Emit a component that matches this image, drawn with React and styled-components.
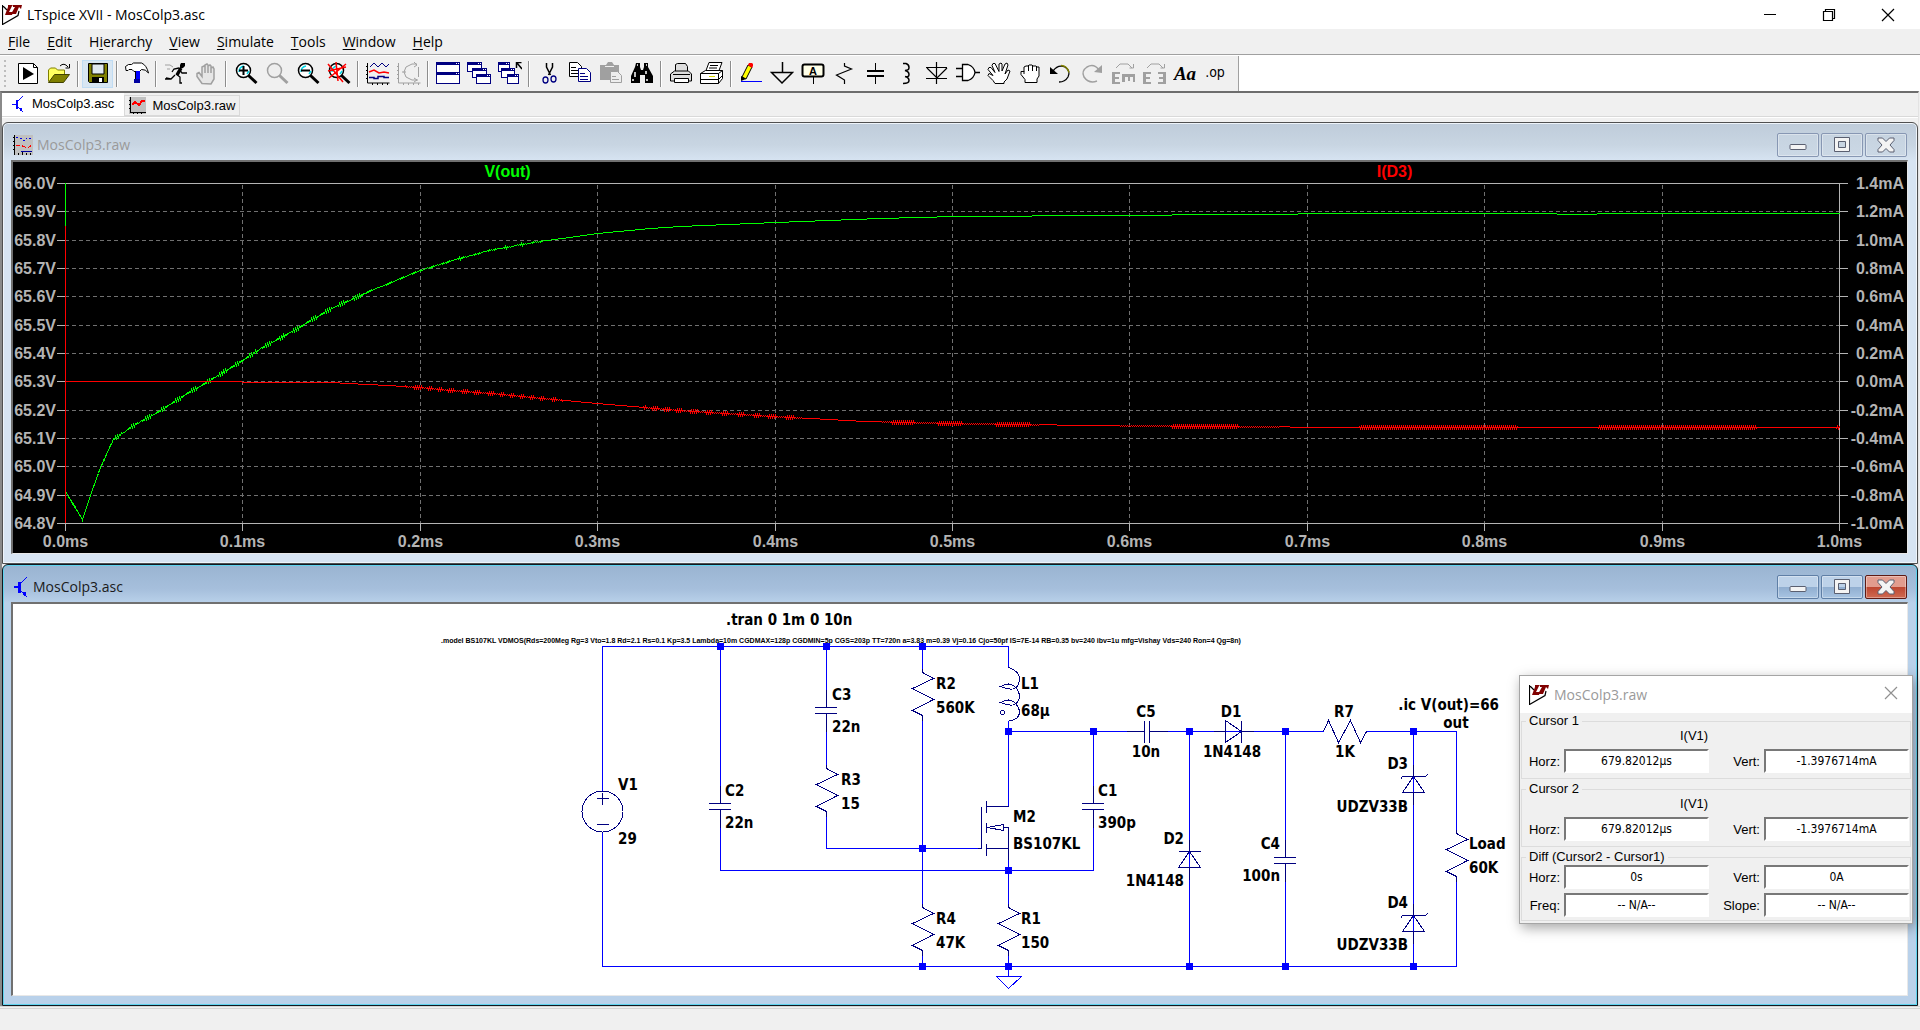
import React, { useLayoutEffect, useRef, useState } from "react";
import styled, { createGlobalStyle, css } from "styled-components";

const UI_FONT = '"Open Sans", "Noto Sans", sans-serif';
const ARIAL = '"Liberation Sans", Arial, sans-serif';
const TAHOMA = '"DejaVu Sans Condensed", "DejaVu Sans", sans-serif';

const Global = createGlobalStyle`
  * { box-sizing: border-box; }
  body { margin: 0; background: #f0f0f0; font-family: ${UI_FONT}; color: #000; }
  button { font: inherit; color: inherit; padding: 0; border: 0; background: none; }
`;

const Shell = styled.div`
  display: flex;
  flex-direction: column;
  min-height: 100vh;
`;

/* ---------- application title and menu ---------- */

const TitleBar = styled.header`
  display: flex;
  align-items: center;
  height: 29px;
  padding: 0 3px 0 2px;
  background: #fff;
`;

const AppTitle = styled.h1`
  flex: 1;
  margin: 0 0 0 5px;
  font-size: 14px;
  font-weight: 400;
  line-height: 20px;
`;

const CaptionButton = styled.button`
  display: grid;
  place-items: center;
  width: 59px;
  height: 28px;
`;

const MenuBar = styled.nav`
  display: flex;
  gap: 1px;
  height: 25px;
  background: #f0f0f0;
`;

const MenuItem = styled.button`
  padding: 0 8px;
  font-size: 14px;
  line-height: 24px;
  u { text-underline-offset: 2px; text-decoration-thickness: 1px; }
`;

/* ---------- toolbar ---------- */

const ToolbarRow = styled.div`
  display: flex;
  height: 37px;
  border-top: 1px solid #a0a0a0;
  background: #fff;
`;

const Toolbar = styled.div`
  display: flex;
  align-items: center;
  margin-top: 1px;
  padding: 0 7px 0 4px;
  border-right: 1px solid #a0a0a0;
  background: #f0f0f0;
`;

const Grip = styled.span`
  width: 2px;
  height: 28px;
  margin-right: 6px;
  background: repeating-linear-gradient(#bdbdbd 0 2px, transparent 2px 5px);
`;

const Tool = styled.button`
  display: grid;
  place-items: center;
  width: 31px;
  height: 28px;
  ${(p) => p.$hot && css`
    background: #d8e6f2;
    border: 1px solid #c0dcf3;
  `}
`;

const Divider = styled.span`
  width: 2px;
  height: 26px;
  margin: 0 3px;
  border-left: 1px solid #8d8d8d;
  border-right: 1px solid #fff;
`;

/* ---------- tabs and workspace ---------- */

const Workspace = styled.main`
  display: flex;
  flex: 1;
  flex-direction: column;
  margin-right: 1px;
  border-top: 2px solid #6d6d6d;
  border-left: 2px solid #8a8a8a;
  border-right: 1px solid #e3e3e3;
`;

const Tabs = styled.div`
  display: flex;
  align-items: flex-end;
  height: 24px;
  border-bottom: 1px solid #d9d9d9;
`;

const Tab = styled.button`
  display: flex;
  align-items: center;
  gap: 6px;
  height: ${(p) => (p.$active ? 23 : 21)}px;
  border: ${(p) => (p.$active ? "0" : "1px solid #d9d9d9")};
  padding: ${(p) => (p.$active ? "0 10px 2px 8px" : "0 4px")};
  background: ${(p) => (p.$active ? "#fff" : "#f0f0f0")};
  font-family: ${ARIAL};
  font-size: 13px;
`;

const Strip = styled.div`
  height: 5px;
  border-top: 1px solid #fff;
  background: #f0f0f0;
`;

const Windows = styled.div`
  display: flex;
  flex: 1;
  flex-direction: column;
`;

const Frame = styled.section`
  position: relative;
  display: flex;
  flex: 1 1 0;
  flex-direction: column;
  padding: 0 9px 9px 8px;
  border: 1px solid ${(p) => (p.$active ? "#101820" : "#505050")};
  border-radius: 6px 6px 0 0;
  background: ${(p) =>
    p.$active
      ? "linear-gradient(#9ab4d1, #a6bfdc 24px, #b9d1ea 38px)"
      : "linear-gradient(#bfccda, #c8d5e2 22px, #d7e4f2 38px)"};
  box-shadow: inset 0 0 0 1px ${(p) => (p.$active ? "#5fd3ee" : "#eef4fa")};
`;

const FrameBar = styled.div`
  display: flex;
  align-items: center;
  gap: 2px;
  height: 37px;
  padding: 7px 1px 0 2px;
`;

const FrameTitle = styled.h2`
  flex: 1;
  margin: 0 0 0 2px;
  font-size: 14px;
  font-weight: 400;
  line-height: 20px;
  color: ${(p) => (p.$active ? "#1a1a1a" : "#9a9a9a")};
`;

const FrameButton = styled.button`
  display: grid;
  place-items: center;
  width: 42px;
  height: 24px;
  border: 1px solid ${(p) => (p.$tone === "close" ? "#5e1a14" : p.$tone === "active" ? "#5f7fa6" : "#8797b3")};
  border-radius: 2px;
  background: ${(p) =>
    p.$tone === "close"
      ? "linear-gradient(#e29c8e 0 48%, #bd4530 50%, #cf6a52)"
      : p.$tone === "active"
      ? "linear-gradient(#bdd2e9 0 48%, #90aed0 50%, #a8c4e2)"
      : "linear-gradient(#c6d3e0, #cbd8e5)"};
  box-shadow: inset 0 0 0 1px rgba(255, 255, 255, 0.35);
`;

const Client = styled.div`
  flex: 1;
  min-height: 240px;
  overflow: hidden;
  border: 2px solid;
  border-width: 2px 1px 1px 2px;
  border-color: #707070 #e8e8e8 #e8e8e8 #707070;
  background: ${(p) => (p.$dark ? "#000" : "#fff")};
  position: relative;
`;

const Fill = styled.div`
  position: absolute;
  inset: 0;
  overflow: hidden;
`;

const Drawing = styled.svg`
  display: block;
  width: 100%;
  height: 100%;
`;

const StatusBar = styled.footer`
  height: 24px;
  border-top: 3px double #d5d5d5;
  background: #f0f0f0;
`;

/* ---------- cursor read-out dialog ---------- */

const Dialog = styled.aside`
  position: absolute;
  top: 110px;
  right: 4px;
  width: 394px;
  border: 1px solid #a5a5a5;
  background: #f0f0f0;
  box-shadow: 2px 4px 12px rgba(0, 0, 0, 0.35);
  font-family: ${ARIAL};
  font-size: 13px;
`;

const DialogBar = styled.div`
  display: flex;
  align-items: center;
  height: 37px;
  padding: 0 14px 0 9px;
  background: #fff;
  font-family: ${UI_FONT};
`;

const DialogTitle = styled.h3`
  flex: 1;
  margin: 0 0 0 5px;
  font-size: 14px;
  font-weight: 400;
  color: #9a9a9a;
`;

const Group = styled.fieldset`
  min-width: 0;
  margin: 0 1px 2px;
  padding: 0 1px ${(p) => (p.$last ? 3 : 5)}px 7px;
  border: 1px solid #dcdcdc;
`;

const Legend = styled.legend`
  margin-left: -3px;
  padding: 0 3px;
  line-height: 16px;
`;

const TraceName = styled.p`
  margin: 0 0 6px;
  padding-left: 151px;
  line-height: 14px;
`;

const Fields = styled.div`
  display: grid;
  grid-template-columns: 31px 145px 1fr 145px;
  align-items: center;
  gap: 4px;
`;

const FieldLabel = styled.label`
  justify-self: end;
`;

const Field = styled.input`
  width: 100%;
  height: 24px;
  padding: 0;
  border: 2px solid;
  border-color: #787878 #fff #fff #787878;
  background: #fff;
  font-family: ${TAHOMA};
  font-size: 12px;
  text-align: center;
  color: #000;
`;

/* ---------- small drawings ---------- */

const Logo = () => (
  <svg width="20" height="20" viewBox="0 0 20 20" aria-hidden="true">
    <path d="M.5 0V19.5L16 10.5L17 6M.5.5L5 5" fill="none" stroke="#000" strokeWidth="1.2" />
    <path d="M6 0h5l-1 1-3 6h3l2-2-2 5H3l3-8zM11 0h9l-1 4-2-2-3 7H9l4-7h-2z" fill="#800000" />
  </svg>
);

const TransistorIcon = ({ size = 20 }) => (
  <svg width="16" height={size} viewBox="0 0 16 20" shapeRendering="crispEdges" aria-hidden="true">
    <path d="M1 10h4M8 6l6-6M7 13l7 7" fill="none" stroke="#0000ff" strokeWidth="1.2" />
    <path d="M5 5h3v11H5zM9 15l4 0v4l-2 0z" fill="#0000ff" />
  </svg>
);

const WaveIcon = () => (
  <svg width="17" height="17" viewBox="0 0 17 17" shapeRendering="crispEdges" aria-hidden="true">
    <rect width="17" height="17" fill="#c0c0c0" />
    <path d="M1.500 0v15.500h15M0 3.500h1M0 7.500h1M0 11.500h1M4.500 15v2M8.500 15v2M12.500 15v2" fill="none" stroke="#000" strokeWidth="1.500" />
    <path d="M3 8l3-3 4 3 3-4h3" fill="none" stroke="#f00" strokeWidth="2" />
  </svg>
);

const PlotIcon = () => (
  <svg width="20" height="20" viewBox="0 0 20 20" shapeRendering="crispEdges" aria-hidden="true">
    <rect x="2" width="18" height="20" fill="#c0c0c0" />
    <path d="M1.500 0v20M0 2.500h1M0 6.500h1M0 10.500h1M0 14.500h1M5.500 18v2M9.500 17v3M13.500 18v2M17.500 18v2" stroke="#000" fill="none" />
    <path d="M3 2l4 1 4 3 4-4 4 3" stroke="#0000e0" strokeDasharray="2 2" fill="none" />
    <path d="M3 10h4l5 2h4l3-2" stroke="#f00" strokeDasharray="4 2" fill="none" />
    <path d="M8 17l3-1h8" stroke="#0000a0" fill="none" />
  </svg>
);

const CaptionIcon = ({ kind, color = "#000" }) => (
  <svg width="14" height="14" viewBox="0 0 14 14" fill="none" stroke={color} aria-hidden="true">
    {kind === "min" && <path d="M1 6.500h12" />}
    {kind === "max" && <path d="M1.500 3.500h9v9h-9zM3.500 3.500v-2h9v9h-2" strokeWidth="1.200" />}
    {kind === "close" && <path d="M1 1l12 12M13 1L1 13" strokeWidth="1.200" />}
  </svg>
);

const FrameIcon = ({ kind }) => (
  <svg width="20" height="18" viewBox="0 0 20 18" aria-hidden="true">
    {kind === "min" && <rect x="2" y="8.500" width="16" height="5" rx="1" fill="#f4f4f4" stroke="#5a5f70" />}
    {kind === "max" && (
      <path d="M2.500 1.500h15v14h-15zM6.500 5.500v6h7v-6z" fill="#f4f4f4" fillRule="evenodd" stroke="#5a5f70" />
    )}
    {kind === "close" && (
      <path d="M2 2h4.500L10 5.500 13.500 2H18v2.500L14 9l4 4.500V16h-4.500L10 12.500 6.500 16H2v-2.500L6 9 2 4.500z" fill="#f4f4f4" stroke="#5a5f70" />
    )}
  </svg>
);

/* ---------- toolbar icons, each on a 24 px grid ---------- */

const K = "#000";
const G = "#a0a0a0";
const N = "#000080";

const Lens = ({ c = K, handle = K, glass = "#fff", mark }) => (
  <>
    <circle cx="9.500" cy="8.500" r="7" fill={glass} stroke={c} strokeWidth="1.500" />
    {c === K && <path d="M5 10q0-5 5-6M13 12l2-3" stroke="#00d8e8" strokeWidth="1.500" fill="none" />}
    <path d="M14.500 13.500l8 7.500" stroke={handle} strokeWidth="3" />
    <path d={mark} stroke={K} strokeWidth="2" fill="none" />
  </>
);

const MiniWin = ({ x, y, w = 14, h = 9 }) => (
  <>
    <rect x={x + 0.5} y={y + 0.5} width={w} height={h} fill="#fff" stroke={N} />
    <rect x={x} y={y} width={w + 1} height="3" fill={N} />
    <path d={`M${x + w - 3} ${y + 1.5}h1m1 0h1`} stroke="#fff" />
  </>
);

const openHand =
  "M8 21.500l-2-3-5-5 1-2 4 2-5-6 1-2 2 0 4 5-3-7 1-2 2 0 4 8V2l2-1 1 1v7l3-7 2-1 1 2-3 9 3-4 2 1-3 8-3 3v1.500z";

const icons = {
  New: (
    <>
      <path d="M2.500 1.500h15l4 4v16h-19z" fill="#fff" stroke={K} />
      <path d="M17.500 1.500v4h4" fill="none" stroke={K} />
      <path d="M7 5l11 7-11 6z" fill={K} />
    </>
  ),
  Open: (
    <>
      <path d="M1.500 19.500V8l2-2h5l2 2h7v4" fill="#ffff60" stroke="#808000" />
      <path d="M1.500 20.500l6-8h15l-6 8z" fill="#808000" stroke="#404000" />
      <path d="M13 4q4-4 8 1M22.500 2v4h-4" fill="none" stroke={K} />
    </>
  ),
  Save: (
    <>
      <path d="M2.500 1.500h19v19h-18l-1-1z" fill="#808000" stroke={K} />
      <path d="M6 2h12v10H6z" fill="#dfe8f0" stroke={K} />
      <path d="M6 15h12v6H6z" fill={K} />
      <path d="M13 16h3v4h-3z" fill="#fff" />
    </>
  ),
  "Control Panel": (
    <>
      <path d="M.5 4.500l3-2h3l2-1.500h8q5 2 7 10-3-4-7-3.500l-2 2H9l-2-2H4l-1 1H1z" fill="#fff" stroke={K} />
      <path d="M10 9h5v12h-5z" fill="#0000ff" />
      <path d="M9 17h6v4H9z" fill="#0000a0" />
      <path d="M10.500 9v8" stroke={K} />
    </>
  ),
  Run: (
    <>
      <path d="M17 1h4v3l-2 2h-3V3z" fill={K} />
      <path d="M17 6l-4 7" stroke={K} strokeWidth="3.500" fill="none" />
      <path d="M15 6l-5 1-2 3M16 8l2 3h5M12 12l4 3v6h2M11 13l-4 4H1M7 17l-5-1" stroke={K} strokeWidth="1.300" fill="none" />
      <path d="M1 3h5l3 2M3 7h3" stroke={G} fill="none" />
    </>
  ),
  Halt: (
    <path d="M7 21.500l-5-7v-3l2-1 3 4V5l2-1 1 1v6-8l2-1 1 1v8-7l2-1 1 1v7-5l2-1 1 2v10l-3 5z" fill="#e6e6e6" stroke={G} strokeWidth="1.500" />
  ),
  "Zoom In": <Lens mark="M5 8.500h9M9.500 4v9" />,
  Pan: <Lens c={G} handle={G} glass="#eee" mark="" />,
  "Zoom Out": <Lens mark="M5 8.500h9" />,
  "Zoom Fit": (
    <>
      <Lens mark="" />
      <path d="M1 2l15 18M19 2L2 16M1 9l18-4M9 0l2 19" stroke="#f00" strokeWidth="1.500" fill="none" />
    </>
  ),
  Autorange: (
    <>
      <path d="M1.500 1v20h22M0 4.500h2M0 8.500h2M0 12.500h2M0 16.500h2M6.500 21v2M11.500 21v2M16.500 21v2M21.500 21v2" stroke={K} fill="none" />
      <path d="M4 5l4-4 4 4 4-4 4 4 3-3" stroke={N} fill="none" />
      <path d="M3 10l5-2 5 3 5-1 5 1" stroke="#f00" strokeWidth="1.500" fill="none" />
      <path d="M3 15.500h5v1h4v-2h6v1h5" stroke={N} strokeWidth="1.500" fill="none" />
    </>
  ),
  "View FFT": (
    <path d="M1.500 1v20h22M0 4.500h2M0 8.500h2M0 12.500h2M0 16.500h2M6.500 21v2M11.500 21v2M16.500 21v2M21.500 21v2M20 2h-5L9 5l-2 5 2 5 6 3h6M17 0l3 3-3 2M17 16l3 2-3 2M21.500 5v10M5 10h4" stroke={G} fill="none" />
  ),
  Tile: (
    <>
      <MiniWin x={0} y={0} w={23} h={10} />
      <MiniWin x={0} y={10} w={23} h={11} />
    </>
  ),
  Cascade: (
    <>
      <MiniWin x={0} y={0} />
      <MiniWin x={5} y={6} />
      <MiniWin x={9} y={12} />
    </>
  ),
  "Close All": (
    <>
      <MiniWin x={0} y={0} w={11} />
      <MiniWin x={3} y={6} w={13} />
      <MiniWin x={9} y={12} w={11} />
      <path d="M19 1l5 6M18.500 6V.500h5" stroke={K} strokeWidth="1.500" fill="none" />
    </>
  ),
  Cut: (
    <>
      <path d="M9.500 1v4l4 8M15.500 1v4l-4 8" stroke={K} strokeWidth="1.500" fill="none" />
      <ellipse cx="8.500" cy="18" rx="2.500" ry="3" fill="none" stroke={N} strokeWidth="1.300" />
      <ellipse cx="16.500" cy="17" rx="2.500" ry="3" fill="none" stroke={N} strokeWidth="1.300" />
    </>
  ),
  Copy: (
    <>
      <path d="M1.500 .5h8l4 4v10h-12z" fill="#fff" stroke={K} />
      <path d="M3 5.500h5M3 8.500h7M3 11.500h7" stroke={K} />
      <path d="M10.500 6.500h8l4 4v9h-12z" fill="#fff" stroke={N} />
      <path d="M12 11.500h5M12 14.500h8M12 17.500h8" stroke={N} />
    </>
  ),
  Paste: (
    <>
      <path d="M1 3h6l2-3h4l2 3h5v15H1z" fill={G} />
      <path d="M6 4.500h9" stroke="#eee" />
      <path d="M11.500 9.500h7l4 4v7h-11z" fill="#eee" stroke={G} />
      <path d="M13 14.500h4M13 17.500h7" stroke={G} />
    </>
  ),
  Find: (
    <>
      <path d="M6 1h4v4l1 3h2l1-3V1h4v4l5 9v7h-8v-8h-5v8H1v-7l4-9z" fill={K} />
      <path d="M7 3h1M16 3h1M5 10v5M16 9v3M3 17v2M17 17v2" stroke="#fff" strokeWidth="1.500" />
    </>
  ),
  Print: (
    <>
      <path d="M6.500 9V2.500l2-1h8l2 3V9" fill="#ddd" stroke={K} />
      <path d="M1.500 12l4-3h14l3 3v7h-21z" fill="#ddd" stroke={K} />
      <path d="M5.500 16.500h14v4h-14z" fill="#fff" stroke={K} />
      <path d="M4 12.500h17" stroke={K} />
    </>
  ),
  "Print Setup": (
    <>
      <path d="M6 8.500L9 .500h13l-3 8z" fill="#fff" stroke={K} />
      <path d="M10 3.500h8M9 6h8" stroke={K} />
      <path d="M.5 11.500l5-3h17v8l-4 5h-18z" fill="#fff" stroke={K} />
      <path d="M.5 11.500h18v10M18.500 11.500l4-3M.5 17.500h18l4-4" stroke={K} fill="none" />
      <path d="M9 14.500h6" stroke="#d8d800" />
    </>
  ),
  Wire: (
    <>
      <path d="M3 15L9 3l4 2-6 12z" fill="#ffff00" stroke={K} />
      <path d="M9 3l1-2h3l1 1v2l-1 2z" fill="#f00" />
      <path d="M2 19v-5l5 3z" fill={K} />
      <path d="M2 19.500h21" stroke="#0000ff" />
    </>
  ),
  Ground: <path d="M12.500 0v10.500M1.500 10.500h21L12 21z" fill="none" stroke={K} strokeWidth="1.500" />,
  "Label Net": (
    <>
      <rect x="1.500" y="2.500" width="21" height="12" rx="2" fill="#ffffe8" stroke={K} strokeWidth="2" />
      <text x="12" y="12.500" textAnchor="middle" fontFamily={ARIAL} fontSize="11" fontWeight="700">A</text>
      <path d="M12.500 15v7" stroke={K} />
    </>
  ),
  Resistor: <path d="M12.500 1v3l7 3-15 6 8 5v4" fill="none" stroke={K} strokeWidth="1.200" />,
  Capacitor: (
    <>
      <path d="M12.500 1v7M12.500 14v8" stroke={K} />
      <path d="M4 9h17M4 14h17" stroke={K} strokeWidth="2" />
    </>
  ),
  Inductor: <path d="M9 1.500h3q3 1 3 4t-4 3q4 1 4 4t-4 2q4 1 4 4t-6 3" fill="none" stroke={K} strokeWidth="1.500" />,
  Diode: <path d="M11.500 0v22M1 5.500h21M1 16.500h21M2 6l10 10 10-10" fill="none" stroke={K} strokeWidth="1.200" />,
  Component: (
    <>
      <path d="M6.500 2.500H12q6 2 7 8-1 6-7 8H6.500z" fill="#fff" stroke={K} strokeWidth="1.300" />
      <path d="M0 6.500h6M0 14.500h6M19 10.500h5" stroke={K} strokeWidth="1.500" />
    </>
  ),
  Move: <path d={openHand} fill="#fff" stroke={K} />,
  Drag: (
    <>
      <path d="M7 20.500v-3l-4-5v-3h3V5l2-1h2l1-1h3l1 1h3l1 1h2v9l-2 3v3.500z" fill="#fff" stroke={K} />
      <path d="M6 9v3M10.500 4v5M14.500 4v5M18.500 5v4" stroke={K} fill="none" />
    </>
  ),
  Undo: (
    <>
      <path d="M4 9q5-7 12-4 6 4 3 10-3 5-9 5" fill="none" stroke={K} strokeWidth="1.300" />
      <path d="M12 3.500q6 0 8 7" fill="none" stroke="#808000" strokeWidth="1.500" />
      <path d="M1 5v7h8z" fill={K} />
    </>
  ),
  Redo: (
    <>
      <path d="M19 8q-5-7-12-3-6 4-3 10 5 7 13 4" fill="none" stroke={G} strokeWidth="1.500" />
      <path d="M22 3v8l-8-1z" fill={G} />
    </>
  ),
  Mirror: (
    <>
      <path d="M1 10h8v2H4v3h4v2H4v3h5v2H1zM11 12h13v8h-2v-5h-3v4h-2v-4h-3v5h-3z" fill={G} />
      <path d="M5 6l4-4h8l4 4M22.500 2v4h-4" fill="none" stroke={G} />
    </>
  ),
  Rotate: (
    <>
      <path d="M1 10h8v2H4v3h4v2H4v3h5v2H1zM16 10h8v12h-8v-2h5v-3h-4v-2h4v-3h-5z" fill={G} />
      <path d="M5 6l4-4h8l4 4M22.500 2v4h-4" fill="none" stroke={G} />
    </>
  ),
  Text: (
    <text x="12" y="18" textAnchor="middle" fontFamily='"Liberation Serif", serif' fontStyle="italic" fontWeight="700" fontSize="19">Aa</text>
  ),
  "SPICE Directive": (
    <text x="11" y="15" textAnchor="middle" fontFamily={TAHOMA} fontSize="14">.op</text>
  ),
};

const toolGroups = [
  ["New", "Open"],
  ["Save"],
  ["Control Panel"],
  ["Run", "Halt"],
  ["Zoom In", "Pan", "Zoom Out", "Zoom Fit"],
  ["Autorange", "View FFT"],
  ["Tile", "Cascade", "Close All"],
  ["Cut", "Copy", "Paste", "Find"],
  ["Print", "Print Setup"],
  ["Wire", "Ground", "Label Net", "Resistor", "Capacitor", "Inductor", "Diode", "Component", "Move", "Drag", "Undo", "Redo", "Mirror", "Rotate", "Text", "SPICE Directive"],
];

/* ---------- waveform plot ---------- */

const UNIT_W = 1774;
const UNIT_H = 340;

const vout = [
  [0, 308], [17, 336], [25, 312], [35, 284], [48, 256], [68, 242], [92, 229], [122, 210], [143, 198],
  [177, 177], [197, 164], [225, 149], [266, 125], [306, 107], [355, 87], [387, 77], [424, 67], [468, 59],
  [532, 50], [585, 45], [615, 43], [710, 39], [814, 35], [890, 33], [1043, 32], [1295, 30], [1491, 30],
  [1492, 31], [1531, 31], [1532, 30], [1774, 30],
];

const id3 = [
  [0, 198], [176, 198], [177, 199], [266, 199], [302, 201], [323, 202], [355, 204], [387, 207], [428, 210],
  [468, 214], [532, 220], [615, 227], [709, 233], [800, 238], [890, 240], [1025, 242], [1160, 243],
  [1290, 244], [1774, 244],
];

function sample(points, x) {
  let i = 1;
  while (i < points.length - 1 && points[i][0] < x) i += 1;
  const [x0, y0] = points[i - 1];
  const [x1, y1] = points[i];
  return y0 + ((y1 - y0) * (x - x0)) / (x1 - x0);
}

function tracePath(points, width, height, left, top, ripple) {
  const parts = [];
  for (let px = 0; px <= width; px += 1) {
    const u = (px / width) * UNIT_W;
    const y = (sample(points, u) / UNIT_H) * height + ripple(u, px);
    parts.push(`${left + px + 0.5} ${Math.round(top + y) + 0.5}`);
  }
  return `M${parts.join("L")}`;
}

const voutRipple = (u, px) => {
  if (u > 480) return 0;
  const size = u < 300 ? 1.3 : 0.7;
  return (px % 2 ? 1 : -1) * size * Math.abs(Math.sin(px * 0.21));
};

const id3Ripple = (u, px) => {
  if (u < 340) return 0;
  const quiet = Math.sin(u / 38) > 0.5;
  return quiet ? 0 : px % 2 ? 0.9 : -0.6;
};

function Plot() {
  const ref = useRef(null);
  const [size, setSize] = useState({ w: 1894, h: 391 });
  useLayoutEffect(() => {
    const el = ref.current;
    const measure = () => setSize({ w: el.clientWidth, h: el.clientHeight });
    measure();
    const watcher = new ResizeObserver(measure);
    watcher.observe(el);
    return () => watcher.disconnect();
  }, []);

  const left = 52;
  const top = 21;
  const width = size.w - left - 68;
  const height = size.h - top - 30;
  const right = left + width;
  const bottom = top + height;
  const rows = Array.from({ length: 13 }, (_, i) => ({
    y: top + Math.round((height * i) / 12) + 0.5,
    volts: `${(66 - i / 10).toFixed(1)}V`,
    amps: `${((14 - 2 * i) / 10).toFixed(1)}mA`,
  }));
  const cols = Array.from({ length: 11 }, (_, i) => ({
    x: left + Math.round((width * i) / 10) + 0.5,
    label: `${(i / 10).toFixed(1)}ms`,
  }));
  const zeroX = left + 0.5;

  return (
    <Fill ref={ref}>
      <Drawing role="img" aria-label="V(out) and I(D3) against time" fontFamily={ARIAL} fontSize="16" fontWeight="700">
        <g shapeRendering="crispEdges" fill="none">
          {rows.slice(1, -1).map((r) => (
            <path key={r.y} d={`M${left} ${r.y}H${right}`} stroke="#707070" strokeDasharray="4 3" />
          ))}
          {cols.slice(1, -1).map((c) => (
            <path key={c.x} d={`M${c.x} ${top + 2}V${bottom}`} stroke="#707070" strokeDasharray="4 3" />
          ))}
          {rows.map((r) => (
            <path key={r.y} d={`M${left - 8} ${r.y}H${left}M${right} ${r.y}h9`} stroke="#b4b4b4" />
          ))}
          {cols.map((c) => (
            <path key={c.x} d={`M${c.x} ${bottom}v8`} stroke="#b4b4b4" />
          ))}
          <rect x={left + 0.5} y={top + 0.5} width={width} height={height} stroke="#b4b4b4" />
          <path d={tracePath(vout, width, height, left, top, voutRipple)} stroke="#00ff00" />
          <path d={tracePath(id3, width, height, left, top, id3Ripple)} stroke="#ff0000" />
          <path d={`M${zeroX} ${top}V${top + height / 8}`} stroke="#00ff00" />
          <path d={`M${zeroX} ${top + height / 8}V${bottom}`} stroke="#ff0000" />
        </g>
        <g fill="#b4b4b4">
          {rows.map((r) => (
            <React.Fragment key={r.y}>
              <text x={left - 9} y={r.y + 5.5} textAnchor="end">{r.volts}</text>
              <text x={size.w - 3} y={r.y + 5.5} textAnchor="end">{r.amps}</text>
            </React.Fragment>
          ))}
          {cols.map((c) => (
            <text key={c.x} x={c.x} y={bottom + 24} textAnchor="middle">{c.label}</text>
          ))}
        </g>
        <text x={left + width / 4 - 1} y="15" textAnchor="middle" fill="#00ff00">V(out)</text>
        <text x={left + (width * 3) / 4 - 1} y="15" textAnchor="middle" fill="#ff0000">I(D3)</text>
      </Drawing>
    </Fill>
  );
}

/* ---------- schematic ---------- */

const wires = [
  "M589 186V42H995V63", "M589 228V362H1443V274", "M707 42V199M707 205V266H1080V205",
  "M813 42V103M813 109V164M813 207V244H968", "M909 42V68M909 111V303M909 346V362",
  "M995 116V202M995 255V303M995 346V372", "M1080 199V127", "M995 127H1131M1136 127H1310M1353 127H1443V229",
  "M1176 127V362", "M1272 127V253M1272 258V362", "M1400 127V362",
];

const joints = [
  [707, 42], [813, 42], [909, 42], [909, 244], [909, 362], [995, 127], [995, 266], [995, 362],
  [1080, 127], [1176, 127], [1176, 362], [1272, 127], [1272, 362], [1400, 127], [1400, 362],
];

const resistors = [[909, 68], [909, 303], [813, 164], [995, 303], [1443, 229]];
const capacitors = [[707, 199], [1080, 199], [813, 103], [1272, 253]];
const zeners = [[1400, 172], [1400, 311]];

const labels = [
  [713, 21, ".tran 0 1m 0 10n"],
  [819, 96, "C3"], [819, 128, "22n"], [828, 181, "R3"], [828, 205, "15"],
  [605, 186, "V1"], [605, 240, "29"], [712, 192, "C2"], [712, 224, "22n"],
  [923, 85, "R2"], [923, 109, "560K"], [1008, 85, "L1"], [1008, 112, "68µ"],
  [1000, 218, "M2"], [1000, 245, "BS107KL"], [1085, 192, "C1"], [1085, 224, "390p"],
  [923, 320, "R4"], [923, 344, "47K"], [1008, 320, "R1"], [1008, 344, "150"],
  [1133, 113, "C5", "middle"], [1133, 153, "10n", "middle"],
  [1218, 113, "D1", "middle"], [1219, 153, "1N4148", "middle"],
  [1171, 240, "D2", "end"], [1171, 282, "1N4148", "end"],
  [1267, 245, "C4", "end"], [1267, 277, "100n", "end"],
  [1331, 113, "R7", "middle"], [1332, 153, "1K", "middle"],
  [1486, 106, ".ic V(out)=66", "end"], [1443, 124, "out", "middle"],
  [1395, 165, "D3", "end"], [1395, 208, "UDZV33B", "end"],
  [1395, 304, "D4", "end"], [1395, 346, "UDZV33B", "end"],
  [1456, 245, "Load"], [1456, 269, "60K"],
];

const modelLine =
  ".model BS107KL VDMOS(Rds=200Meg Rg=3 Vto=1.8 Rd=2.1 Rs=0.1 Kp=3.5 Lambda=10m CGDMAX=128p CGDMIN=5p CGS=203p TT=720n a=3.83 m=0.39 Vj=0.16 Cjo=50pf IS=7E-14 RB=0.35 bv=240 ibv=1u mfg=Vishay Vds=240 Ron=4 Qg=8n)";

const Schematic = () => (
  <Fill>
    <Drawing role="img" aria-label="MOSFET Colpitts oscillator schematic" fontFamily={TAHOMA} fontWeight="700" fontSize="15">
      <text x="428" y="39" fontFamily={ARIAL} fontSize="7">{modelLine}</text>
      <g transform="translate(.5 .5)" fill="none" shapeRendering="crispEdges">
        <g stroke="#0000ff">
          {wires.map((d) => <path key={d} d={d} />)}
        </g>
        <g stroke="#000080">
          <circle cx="589" cy="207" r="20.500" />
          <path d="M583 194h12M589 188v12M583 220h12" />
          {resistors.map(([x, y]) => (
            <path key={`${x}-${y}`} d={`M${x} ${y - 4}v4l11 6l-21 10l21 11l-21 11l10 5v5`} />
          ))}
          <path d="M1310 127l5-11 10 22 12-22 10 22 6-11" />
          {capacitors.map(([x, y]) => (
            <path key={`${x}-${y}`} d={`M${x - 12} ${y}h22M${x - 12} ${y + 6}h22M${x} ${y}v-18M${x} ${y + 6}v18`} />
          ))}
          <path d="M1131 116v22M1136 116v22M1113 127h18M1136 127h18" />
          <path d="M995 63Q1006 67 1006 74Q1006 81 1001 84Q996 86 987 82Q996 77 1001 82Q1006 86 1006 92Q1006 97 1001 100Q996 102 987 98Q996 93 1001 98Q1006 103 1006 108Q1005 116 995 116" />
          <circle cx="989" cy="108" r="2" />
          <path d="M964 244h4V202M973 196v12M973 218v10M973 239v12M973 202h22M973 244h22M995 223V255M995 223h-5M974 223l16-3v6z" />
          <path d="M1165 247h22M1176 247l-11 16h22zM1176 263v12M1176 247v-12" />
          <path d="M1228 116v22M1228 127l-16-11v22zM1228 127h12M1212 127h-12" />
          {zeners.map(([x, y]) => (
            <path key={y} d={`M${x - 13} ${y + 3}l2-3h23l2-2M${x} ${y}l-11 16h22zM${x} ${y - 12}v12M${x} ${y + 16}v12`} />
          ))}
        </g>
        <path d="M983 372h25l-13 12z" stroke="#0000ff" />
      </g>
      {joints.map(([x, y]) => (
        <rect key={`${x}-${y}`} x={x - 3} y={y - 3} width="7" height="7" fill="#0000ff" />
      ))}
      {labels.map(([x, y, text, anchor]) => (
        <text key={`${x}-${y}`} x={x} y={y} textAnchor={anchor || "start"}>{text}</text>
      ))}
    </Drawing>
  </Fill>
);

/* ---------- windows ---------- */

const MdiWindow = ({ title, icon, active, dark, children, overlay }) => (
  <Frame $active={active} aria-label={title}>
    <FrameBar>
      {icon}
      <FrameTitle $active={active}>{title}</FrameTitle>
      {["min", "max", "close"].map((kind) => (
        <FrameButton key={kind} aria-label={kind} $tone={active ? (kind === "close" ? "close" : "active") : "idle"}>
          <FrameIcon kind={kind} />
        </FrameButton>
      ))}
    </FrameBar>
    <Client $dark={dark}>{children}</Client>
    {overlay}
  </Frame>
);

const Reading = ({ id, label, value }) => (
  <>
    <FieldLabel htmlFor={id}>{label}</FieldLabel>
    <Field id={id} defaultValue={value} readOnly />
  </>
);

const CursorDialog = () => (
  <Dialog aria-label="Cursor readings">
    <DialogBar>
      <Logo />
      <DialogTitle>MosColp3.raw</DialogTitle>
      <button aria-label="Close readings"><CaptionIcon kind="close" color="#909090" /></button>
    </DialogBar>
    {[1, 2].map((n) => (
      <Group key={n}>
        <Legend>Cursor {n}</Legend>
        <TraceName>I(V1)</TraceName>
        <Fields>
          <Reading id={`h${n}`} label="Horz:" value="679.82012µs" />
          <Reading id={`v${n}`} label="Vert:" value="-1.3976714mA" />
        </Fields>
      </Group>
    ))}
    <Group $last>
      <Legend>Diff (Cursor2 - Cursor1)</Legend>
      <Fields>
        <Reading id="dh" label="Horz:" value="0s" />
        <Reading id="dv" label="Vert:" value="0A" />
        <Reading id="df" label="Freq:" value="-- N/A--" />
        <Reading id="ds" label="Slope:" value="-- N/A--" />
      </Fields>
    </Group>
  </Dialog>
);

const menus = [
  ["", "F", "ile"], ["", "E", "dit"], ["H", "i", "erarchy"], ["", "V", "iew"],
  ["", "S", "imulate"], ["", "T", "ools"], ["", "W", "indow"], ["", "H", "elp"],
];

export default function App() {
  return (
    <Shell>
      <Global />
      <TitleBar>
        <Logo />
        <AppTitle>LTspice XVII - MosColp3.asc</AppTitle>
        {["min", "max", "close"].map((kind) => (
          <CaptionButton key={kind} aria-label={kind}><CaptionIcon kind={kind} /></CaptionButton>
        ))}
      </TitleBar>
      <MenuBar>
        {menus.map(([before, key, after]) => (
          <MenuItem key={key + after}>{before}<u>{key}</u>{after}</MenuItem>
        ))}
      </MenuBar>
      <ToolbarRow>
        <Toolbar role="toolbar">
          <Grip />
          {toolGroups.map((group, i) => (
            <React.Fragment key={group[0]}>
              {i > 0 && <Divider />}
              {group.map((name) => (
                <Tool key={name} aria-label={name} $hot={name === "Save"}>
                  <svg width="24" height="24" viewBox="0 0 24 24" aria-hidden="true">{icons[name]}</svg>
                </Tool>
              ))}
            </React.Fragment>
          ))}
        </Toolbar>
      </ToolbarRow>
      <Workspace>
        <Tabs>
          <Tab $active><TransistorIcon size={16} />MosColp3.asc</Tab>
          <Tab><WaveIcon />MosColp3.raw</Tab>
        </Tabs>
        <Strip />
        <Windows>
          <MdiWindow title="MosColp3.raw" icon={<PlotIcon />} dark>
            <Plot />
          </MdiWindow>
          <MdiWindow title="MosColp3.asc" icon={<TransistorIcon />} active overlay={<CursorDialog />}>
            <Schematic />
          </MdiWindow>
        </Windows>
      </Workspace>
      <StatusBar />
    </Shell>
  );
}
